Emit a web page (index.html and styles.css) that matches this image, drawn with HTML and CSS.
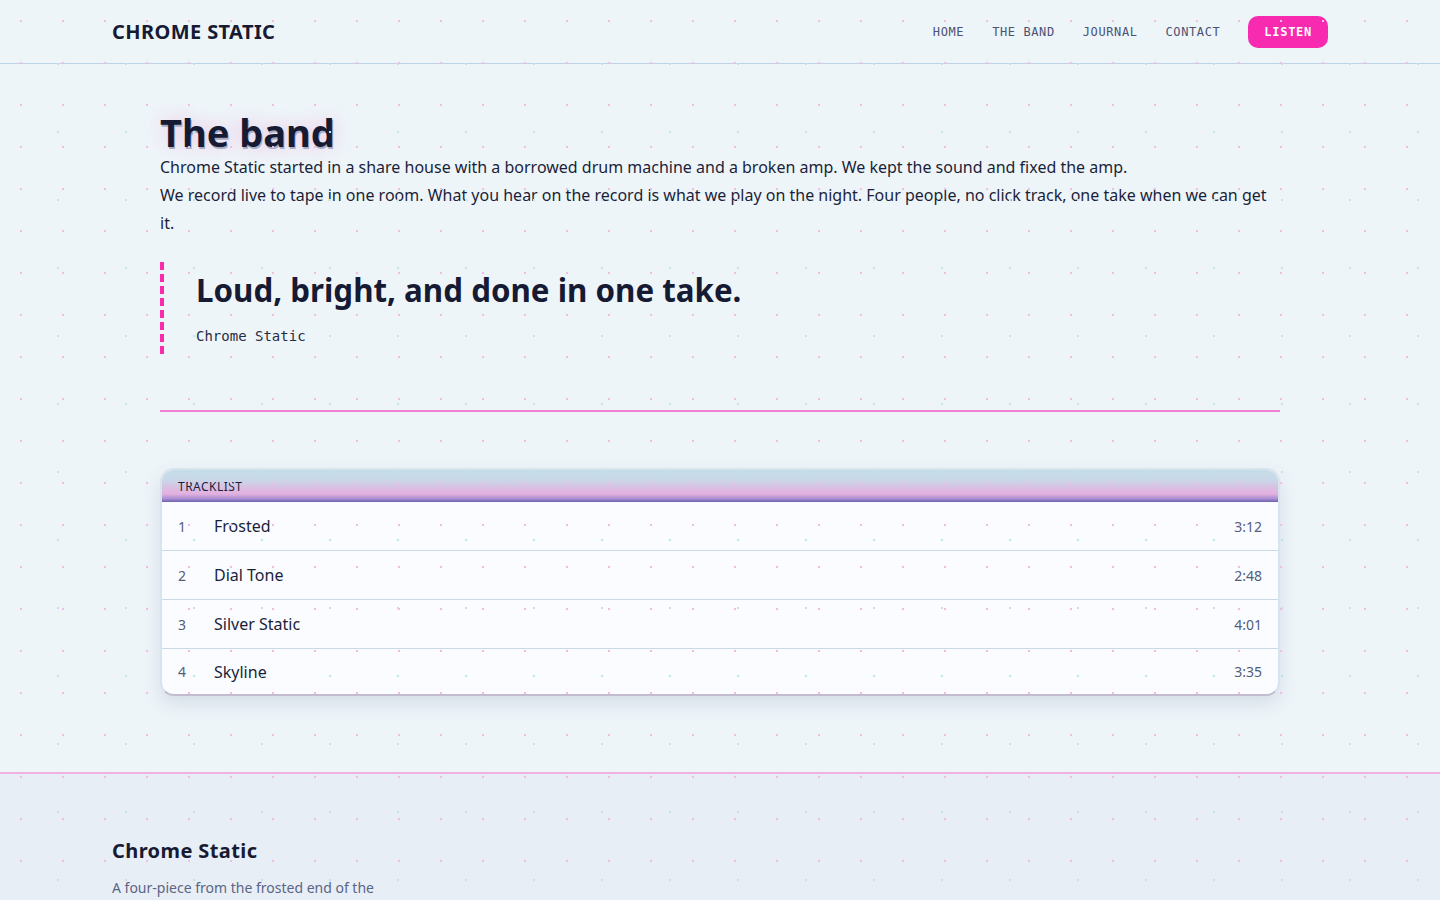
FILE: index.html
```html
<!DOCTYPE html>
<html lang="en">
<head>
    <meta charset="UTF-8">
    <meta name="viewport" content="width=device-width, initial-scale=1.0">
    <title>The band - Chrome Static</title>
    <link rel="stylesheet" href="styles.css">
</head>
<body>

    <header class="site-header">
        <div class="header-inner">
            <a class="logo" href="#">CHROME STATIC</a>
            <nav class="nav">
                <a href="#">Home</a>
                <a href="#">The band</a>
                <a href="#">Journal</a>
                <a href="#">Contact</a>
                <a class="listen-btn" href="#">Listen</a>
            </nav>
        </div>
    </header>

    <main class="page">
        <h1 class="page-title">The band</h1>
        <p class="lead">Chrome Static started in a share house with a borrowed drum machine and a broken amp. We kept the sound and fixed the amp.</p>
        <p class="lead">We record live to tape in one room. What you hear on the record is what we play on the night. Four people, no click track, one take when we can get it.</p>

        <blockquote class="pull-quote">
            <p>Loud, bright, and done in one take.</p>
            <cite>Chrome Static</cite>
        </blockquote>

        <hr class="divider">

        <div class="tracklist">
            <div class="tracklist-head">TRACKLIST</div>
            <div class="track">
                <span class="track-no">1</span>
                <span class="track-name">Frosted</span>
                <span class="track-time">3:12</span>
            </div>
            <div class="track">
                <span class="track-no">2</span>
                <span class="track-name">Dial Tone</span>
                <span class="track-time">2:48</span>
            </div>
            <div class="track">
                <span class="track-no">3</span>
                <span class="track-name">Silver Static</span>
                <span class="track-time">4:01</span>
            </div>
            <div class="track">
                <span class="track-no">4</span>
                <span class="track-name">Skyline</span>
                <span class="track-time">3:35</span>
            </div>
        </div>
    </main>

    <footer class="site-footer">
        <div class="footer-inner">
            <h3>Chrome Static</h3>
            <p>A four-piece from the frosted end of the city. Records, shows and the odd zine.</p>
        </div>
    </footer>

</body>
</html>
```

FILE: styles.css
```css
body {
    font-family: "Noto Sans", "Open Sans", sans-serif;
    background-color: #eef5f9;
    color: #1b1f3a;
    margin: 0;
    padding: 0;
}

/* dotted grid over everything */
body::after {
    content: "";
    position: fixed;
    top: 0;
    left: 0;
    right: 0;
    bottom: 0;
    pointer-events: none;
    z-index: 50;
    background-image:
        radial-gradient(circle at 21px 21px, #f0bde6 1px, transparent 1.6px),
        radial-gradient(circle at 58px 64px, #c2e4ef 1px, transparent 1.6px);
    background-size: 42px 42px, 68px 68px;
}

a {
    text-decoration: none;
}

.site-header {
    border-bottom: 1px solid #bcd5e6;
}

.header-inner {
    width: 1216px;
    height: 63px;
    margin: 0 auto;
    display: flex;
    align-items: center;
    justify-content: space-between;
}

.logo {
    font-size: 20px;
    font-weight: 700;
    letter-spacing: 0.02em;
    color: #161a33;
}

.nav {
    display: flex;
    align-items: center;
    gap: 28px;
}

.nav a {
    font-family: "DejaVu Sans Mono", monospace;
    font-size: 12px;
    letter-spacing: 0.05em;
    text-transform: uppercase;
    color: #4a5372;
}

.nav .listen-btn {
    background-color: #f72ab0;
    color: white;
    font-weight: bold;
    letter-spacing: 0.06em;
    height: 32px;
    padding: 0 16px;
    border-radius: 10px;
    display: flex;
    align-items: center;
}

.page {
    width: 1120px;
    margin: 0 auto;
    padding: 48px 0 76px;
}

.page-title {
    font-size: 38px;
    line-height: 1.08;
    font-weight: 700;
    margin: 0;
    color: #161a33;
    text-shadow: 1px 2px 0 #a6adc4, 0 0 20px rgba(247, 42, 176, 0.25);
}

.lead {
    font-size: 16px;
    line-height: 28px;
    margin: 0;
}

.pull-quote {
    margin: 25px 0 0;
    padding: 8px 0 8px 32px;
    border-left: 4px dashed #f72ab0;
}

.pull-quote p {
    font-size: 31.3px;
    line-height: 40px;
    font-weight: 700;
    margin: 0 0 16px;
    color: #161a33;
}

.pull-quote cite {
    display: block;
    font-style: normal;
    font-family: "DejaVu Sans Mono", monospace;
    font-size: 14px;
    line-height: 20px;
    color: #272c46;
}

.divider {
    border: none;
    height: 2px;
    background-color: #f27fd0;
    margin: 56px 0;
}

.tracklist {
    border: 2px solid #d8e4ed;
    border-bottom-color: #c4bccf;
    border-radius: 14px;
    overflow: hidden;
    background-color: #fafcff;
    box-shadow: 0 8px 18px rgba(90, 100, 140, 0.16);
}

.tracklist-head {
    height: 32px;
    padding: 0 16px;
    display: flex;
    align-items: center;
    font-size: 12px;
    letter-spacing: 0.04em;
    color: #1b1f3a;
    background: linear-gradient(to bottom, #c6dce9 0%, #c8d8e8 30%, #dcbce2 60%, #e2b0e0 75%, #a88ed0 90%, #6c60b0 100%);
}

.track {
    display: flex;
    align-items: center;
    height: 49px;
    box-sizing: border-box;
    padding: 0 16px;
    border-top: 1px solid #c9dae6;
}

.tracklist-head + .track {
    height: 48px;
    border-top: none;
}

.track:last-child {
    height: 46px;
}

.track-no {
    width: 36px;
    font-size: 14px;
    color: #545d7a;
}

.track-name {
    flex: 1;
    font-size: 16px;
}

.track-time {
    font-size: 14px;
    color: #545d7a;
}

.site-footer {
    background-color: #e8eef6;
    border-top: 2px solid #f3b2e2;
}

.footer-inner {
    width: 1216px;
    margin: 0 auto;
    padding: 64px 0 48px;
}

.site-footer h3 {
    font-size: 20px;
    line-height: 26px;
    letter-spacing: 0.02em;
    margin: 0 0 13px;
    color: #161a33;
}

.site-footer p {
    max-width: 280px;
    font-size: 14px;
    line-height: 22px;
    margin: 0;
    color: #5b6585;
}
```
